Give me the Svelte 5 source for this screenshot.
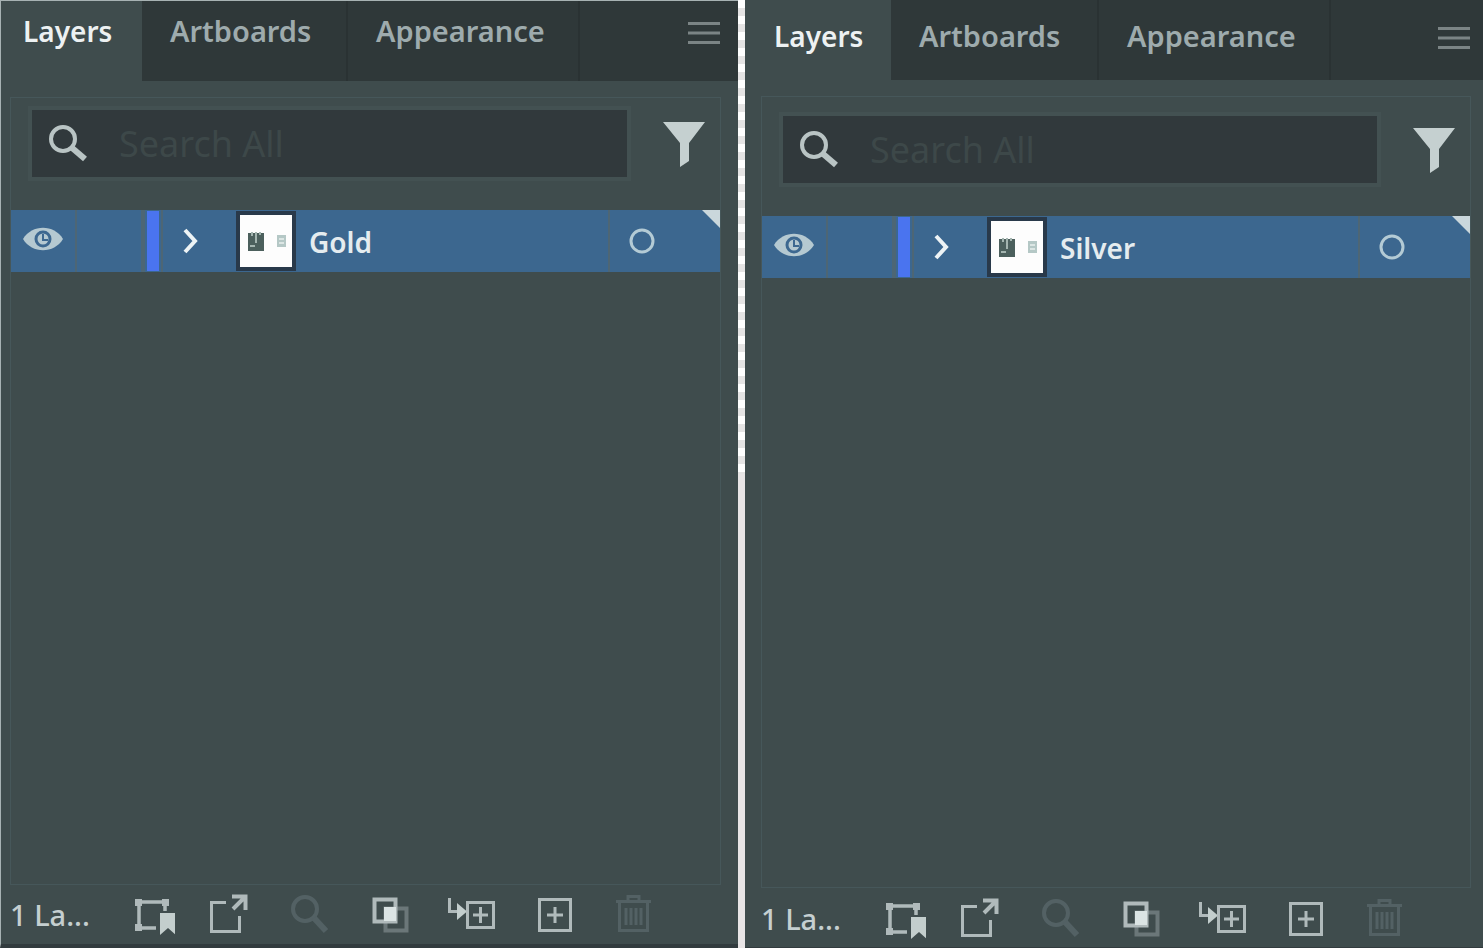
<script lang="ts">
	type Panel = { id: string; layer: string };

	const panels: Panel[] = [
		{ id: 'gold', layer: 'Gold' },
		{ id: 'silver', layer: 'Silver' }
	];
	const tabs = ['Layers', 'Artboards', 'Appearance'];
	const actions = [
		{ icon: 'collect', label: 'Collect for export', disabled: false },
		{ icon: 'export', label: 'Export selection', disabled: false },
		{ icon: 'locate', label: 'Locate object', disabled: true },
		{ icon: 'mask', label: 'Make clipping mask', disabled: false },
		{ icon: 'sublayer', label: 'Create new sublayer', disabled: false },
		{ icon: 'layer', label: 'Create new layer', disabled: false },
		{ icon: 'trash', label: 'Delete selection', disabled: true }
	];

	let active = $state<Record<string, string>>({ gold: 'Layers', silver: 'Layers' });
</script>

{#snippet actionIcon(name: string)}
	<svg viewBox="0 0 50 50" width="50" height="50" fill="none" stroke="currentColor" stroke-width="3" aria-hidden="true">
		{#if name === 'collect'}
			<path d="M14 12H39M14 12V38M14 38H31M40 12V21" stroke-width="3.500" />
			<path d="M10 9h7v7h-7zM37 9h7v7h-7zM10 34h7v7h-7z" fill="currentColor" stroke="none" />
			<path d="M35 23H51V45L43 38L35 45Z" fill="#c3cecd" stroke="none" />
		{:else if name === 'export'}
			<path d="M21 12.500H6.500V41.500H34.500V26" />
			<path d="M28 19L40 7M27 6.500H40.500V20" stroke-width="4" />
		{:else if name === 'locate'}
			<circle cx="20" cy="19" r="12" stroke-width="4" />
			<path d="M29 28L41 41" stroke-width="6" />
		{:else if name === 'mask'}
			<path d="M20.500 18.500H41.500V40.500H20.500Z" stroke-width="4" opacity="0.4" />
			<path d="M9.500 9.500H30.500V31.500H9.500Z" stroke-width="4" />
			<path d="M19 17H31V31H19Z" fill="#dbe4e4" stroke="none" />
		{:else if name === 'sublayer'}
			<path d="M4.500 8V21.500H13" />
			<path d="M12 13L22 21.500L12 30Z" fill="#c3cecd" stroke="none" />
			<path d="M22.500 12.500H48.500V37.500H22.500Z M35.500 17V33M28 25H43" />
		{:else if name === 'layer'}
			<path d="M14.500 9.500H45.500V40.500H14.500Z M30 17V33M22 25H38" />
		{:else}
			<path d="M11 11.500H46M23 11V6.500H34V11M14.500 12V40.500H42.500V12M21 18V35M26 18V35M31 18V35M36 18V35" />
		{/if}
	</svg>
{/snippet}

<main class="workspace">
	{#each panels as panel (panel.id)}
		<section class="panel {panel.id}" aria-label="{panel.layer} panel">
			<div class="tabs" role="tablist">
				{#each tabs as tab}
					<button
						class="tab"
						class:active={active[panel.id] === tab}
						role="tab"
						aria-selected={active[panel.id] === tab}
						onclick={() => (active[panel.id] = tab)}>{tab}</button
					>
				{/each}
				<button class="menu" aria-label="Panel menu">
					<svg viewBox="0 0 32 28" width="32" height="28" aria-hidden="true">
						<path d="M0 4.500H32M0 14H32M0 23.500H32" stroke="currentColor" stroke-width="3" />
					</svg>
				</button>
			</div>

			<div class="body">
				<div class="search-row">
					<label class="search">
						<svg viewBox="0 0 40 38" width="40" height="38" fill="none" stroke="#b9c4c4" aria-hidden="true">
							<circle cx="15" cy="14" r="12" stroke-width="4" />
							<path d="M23 22L37 34" stroke-width="6" />
						</svg>
						<input type="text" placeholder="Search All" aria-label="Search all layers" />
					</label>
					<button class="filter" aria-label="Filter layers">
						<svg viewBox="0 0 42 46" width="42" height="46" aria-hidden="true">
							<path d="M0 1H42L26 22V40L17 46V22Z" fill="#c5d0d0" />
						</svg>
					</button>
				</div>

				<ul class="layers">
					<li class="layer">
						<button class="cell eye" aria-label="Toggle visibility">
							<svg viewBox="0 0 40 28" width="40" height="28" aria-hidden="true">
								<path d="M0 14C9 -1 31 -1 40 14C31 29 9 29 0 14Z" fill="#b5c9d1" />
								<circle cx="20" cy="14" r="7" fill="none" stroke="#3d6890" stroke-width="3" />
								<path d="M20 9V15H25" fill="none" stroke="#3d6890" stroke-width="2" />
							</svg>
						</button>
						<button class="cell lock" aria-label="Toggle lock"></button>
						<span class="cell color"></span>
						<button class="expand" aria-label="Expand layer">
							<svg viewBox="0 0 16 26" width="16" height="26" aria-hidden="true">
								<path d="M2 2L12 13L2 24" fill="none" stroke="#edf3f5" stroke-width="4" />
							</svg>
						</button>
						<span class="thumb">
							<svg viewBox="0 0 52 52" width="52" height="52" aria-hidden="true">
								<path d="M0 0H52V52H0Z" fill="#fdfdfd" />
								<path d="M8 18H24V36H8Z" fill="#4c605d" />
								<path d="M12 17V21M16 17V28M10 31H15M20 17V20" stroke="#a4b5b0" stroke-width="2" />
								<path d="M37 20H46V32H37Z" fill="#b5c8c6" />
								<path d="M39 24H44M39 28H44" stroke="#dce6e4" stroke-width="2" />
							</svg>
						</span>
						<span class="name">{panel.layer}</span>
						<button class="target" aria-label="Target layer">
							<svg viewBox="0 0 28 28" width="28" height="28" aria-hidden="true">
								<circle cx="14" cy="14" r="11" fill="none" stroke="#b4cbd5" stroke-width="3" />
							</svg>
						</button>
					</li>
				</ul>
			</div>

			<footer class="footer">
				<span class="count">1 La...</span>
				{#each actions as action}
					<button class="action" aria-label={action.label} disabled={action.disabled}>
						{@render actionIcon(action.icon)}
					</button>
				{/each}
			</footer>
		</section>
	{/each}
</main>

<style>
	:global(body) {
		margin: 0;
		background: #3f4c4d;
	}

	.workspace {
		display: grid;
		grid-template-columns: 1fr 1fr;
		column-gap: 7px;
		min-height: 100vh;
		background:
			linear-gradient(transparent 50%, #e8e5e6 50%),
			repeating-linear-gradient(#fff 0 8px, #e5e4e4 8px 16px);
		font-family: 'Noto Sans', sans-serif;
	}

	.panel {
		display: flex;
		flex-direction: column;
		box-sizing: border-box;
		min-width: 0;
		background: #3f4c4d;
		color: #c5cfd0;
	}

	.gold {
		--label-drop: 13px;
		--first-tab: 141px;
		--second-tab: 206px;
		--search-top: 12px;
		--inset-left: 9px;
		--inset-right: 17px;
		--footer-top: 0;
		border-top: 1px solid #a7b2b3;
		border-bottom: 4px solid #323b3e;
		border-left: 1px solid #a7b2b3;
	}

	.silver {
		--label-drop: 19px;
		--first-tab: 146px;
		--second-tab: 208px;
		--search-top: 19px;
		--inset-left: 16px;
		--inset-right: 12px;
		--footer-top: 3px;
		border-bottom: 1px solid #323b3e;
	}

	button {
		padding: 0;
		border: 0;
		background: none;
		color: inherit;
		font: inherit;
		cursor: pointer;
	}

	svg {
		display: block;
		flex: none;
	}

	.tabs {
		display: flex;
		height: 80px;
		background: #2f3839;
	}

	.tab {
		display: flex;
		box-sizing: border-box;
		padding: var(--label-drop) 0 0 28px;
		border-right: 2px solid #2a3233;
		color: #9eabad;
		font-size: 29px;
		font-weight: 600;
		line-height: 34px;
	}

	.tab:nth-child(1) {
		width: var(--first-tab);
		padding-left: calc(var(--inset-left) + 13px);
	}

	.tab:nth-child(2) {
		width: var(--second-tab);
	}

	.tab:nth-child(3) {
		width: 232px;
	}

	.tab.active {
		border-color: #3f4c4d;
		background: #3f4c4d;
		color: #edf1f2;
		font-size: 28px;
	}

	.menu {
		display: flex;
		align-items: flex-start;
		margin-left: auto;
		padding: calc(var(--label-drop) + 5px) calc(var(--inset-right) + 1px) 0 0;
		color: #7b8485;
	}

	.body {
		flex: 1;
		margin: 16px var(--inset-right) 0 var(--inset-left);
		border: 1px solid #46575a;
	}

	.search-row {
		display: flex;
		align-items: center;
		padding: var(--search-top) 15px 33px 21px;
	}

	.search {
		display: flex;
		flex: 1;
		align-items: center;
		box-sizing: border-box;
		min-width: 0;
		height: 67px;
		padding-left: 16px;
		background: #31393c;
		box-shadow: 0 0 0 4px #435152;
	}

	.search input {
		flex: 1;
		min-width: 0;
		margin-left: 31px;
		padding: 0;
		border: 0;
		outline: 0;
		background: none;
		color: #c5cfd0;
		font: inherit;
		font-size: 36px;
		line-height: 44px;
	}

	.search input::placeholder {
		color: #3d4849;
		opacity: 1;
	}

	.filter {
		margin-left: 36px;
	}

	.layers {
		margin: 0;
		padding: 0;
		list-style: none;
	}

	.layer {
		position: relative;
		display: flex;
		height: 62px;
		background: #3c678f;
		color: #e5ecef;
	}

	.layer::after {
		position: absolute;
		top: 0;
		right: 0;
		width: 18px;
		height: 18px;
		background: #cad7dc;
		clip-path: polygon(0 0, 100% 0, 100% 100%);
		content: '';
	}

	.cell {
		box-sizing: border-box;
		border-right: 2px solid #4d6675;
	}

	.eye,
	.lock {
		width: 66px;
	}

	.eye {
		display: flex;
		align-items: center;
		justify-content: center;
		padding-bottom: 4px;
	}

	.color {
		width: 20px;
		border-left: 2px solid #4d6675;
		background: #4a74ef;
		background-clip: content-box;
		padding: 1px 2px;
	}

	.expand {
		display: flex;
		align-items: center;
		justify-content: center;
		width: 56px;
	}

	.thumb {
		align-self: center;
		margin-left: 17px;
		border: 4px solid #29394a;
	}

	.name {
		flex: 1;
		min-width: 0;
		margin-left: 13px;
		font-size: 28px;
		font-weight: 600;
		line-height: 64px;
	}

	.target {
		display: flex;
		align-items: center;
		box-sizing: border-box;
		width: 112px;
		padding-left: 18px;
		border-left: 2px solid #4d6675;
	}

	.footer {
		display: flex;
		align-items: center;
		box-sizing: border-box;
		height: 59px;
		padding: var(--footer-top) 0 0 var(--inset-left);
	}

	.count {
		width: 115px;
		flex: none;
		font-size: 29px;
		font-weight: 500;
		line-height: 34px;
	}

	.action {
		margin-right: 30px;
		color: #b0babb;
	}

	.action:last-child {
		margin-right: 0;
	}

	.action:disabled {
		color: #536164;
		cursor: default;
	}
</style>
